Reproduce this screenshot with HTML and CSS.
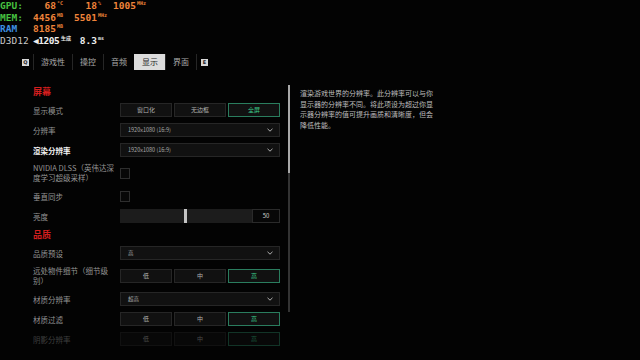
FILE: index.html
```html
<!DOCTYPE html>
<html lang="zh-CN">
<head>
    <meta charset="UTF-8">
    <title>显示设置</title>
    <link rel="stylesheet" href="styles.css">
</head>
<body>
    <div class="hud">
        <div class="hud-row">
            <span class="hud-label green">GPU:</span>
            <span class="hud-val">68</span><span class="hud-unit">°C</span>
            <span class="hud-val v2">18</span><span class="hud-unit">%</span>
            <span class="hud-val">1005</span><span class="hud-unit">MHz</span>
        </div>
        <div class="hud-row">
            <span class="hud-label green">MEM:</span>
            <span class="hud-val">4456</span><span class="hud-unit">MB</span>
            <span class="hud-val v2">5501</span><span class="hud-unit">MHz</span>
        </div>
        <div class="hud-row">
            <span class="hud-label blue">RAM</span>
            <span class="hud-val">8185</span><span class="hud-unit">MB</span>
        </div>
        <div class="hud-row">
            <span class="hud-label grey">D3D12</span>
            <span class="hud-val fps white">◀1205</span><span class="hud-unit short white">生成</span>
            <span class="hud-val v2 white">8.3</span><span class="hud-unit white">ms</span>
        </div>
    </div>

    <nav class="tabs">
        <span class="key">Q</span>
        <div class="tab">游戏性</div>
        <div class="tab">操控</div>
        <div class="tab">音频</div>
        <div class="tab active">显示</div>
        <div class="tab">界面</div>
        <span class="key">E</span>
    </nav>

    <main class="main">
        <section class="settings">
            <h3 class="group-title">屏幕</h3>

            <div class="row">
                <div class="row-label">显示模式</div>
                <div class="segmented">
                    <div class="seg">窗口化</div>
                    <div class="seg">无边框</div>
                    <div class="seg selected">全屏</div>
                </div>
            </div>

            <div class="row">
                <div class="row-label">分辨率</div>
                <div class="dropdown"><span>1920x1080 (16:9)</span><svg class="chev" viewBox="0 0 6 4"><path d="M0.5 0.8 L3 3.2 L5.5 0.8" /></svg></div>
            </div>

            <div class="row">
                <div class="row-label hot">渲染分辨率</div>
                <div class="dropdown"><span>1920x1080 (16:9)</span><svg class="chev" viewBox="0 0 6 4"><path d="M0.5 0.8 L3 3.2 L5.5 0.8" /></svg></div>
            </div>

            <div class="row tall">
                <div class="row-label">NVIDIA DLSS（英伟达深<br>度学习超级采样）</div>
                <div class="checkbox"></div>
            </div>

            <div class="row">
                <div class="row-label">垂直同步</div>
                <div class="checkbox"></div>
            </div>

            <div class="row">
                <div class="row-label">亮度</div>
                <div class="slider">
                    <div class="track"><div class="thumb"></div></div>
                    <div class="slider-val">50</div>
                </div>
            </div>

            <h3 class="group-title second">品质</h3>

            <div class="row">
                <div class="row-label">品质预设</div>
                <div class="dropdown"><span>高</span><svg class="chev" viewBox="0 0 6 4"><path d="M0.5 0.8 L3 3.2 L5.5 0.8" /></svg></div>
            </div>

            <div class="row tall">
                <div class="row-label">远处物件细节（细节级<br>别）</div>
                <div class="segmented">
                    <div class="seg">低</div>
                    <div class="seg">中</div>
                    <div class="seg selected">高</div>
                </div>
            </div>

            <div class="row">
                <div class="row-label">材质分辨率</div>
                <div class="dropdown"><span>超高</span><svg class="chev" viewBox="0 0 6 4"><path d="M0.5 0.8 L3 3.2 L5.5 0.8" /></svg></div>
            </div>

            <div class="row">
                <div class="row-label">材质过滤</div>
                <div class="segmented">
                    <div class="seg">低</div>
                    <div class="seg">中</div>
                    <div class="seg selected">高</div>
                </div>
            </div>

            <div class="row faded">
                <div class="row-label">阴影分辨率</div>
                <div class="segmented">
                    <div class="seg">低</div>
                    <div class="seg">中</div>
                    <div class="seg selected">高</div>
                </div>
            </div>
        </section>

        <div class="scrollbar"><div class="scroll-thumb"></div></div>

        <p class="desc">渲染游戏世界的分辨率。此分辨率可以与你显示器的分辨率不同。将此项设为超过你显示器分辨率的值可提升画质和清晰度，但会降低性能。</p>
    </main>
</body>
</html>
```

FILE: styles.css
```css
* {
    margin: 0;
    padding: 0;
    box-sizing: border-box;
}

body {
    width: 640px;
    height: 360px;
    overflow: hidden;
    background-color: #030303;
    color: #a0a0a0;
    font-family: "Noto Sans CJK SC", "Noto Sans", sans-serif;
    position: relative;
}

/* Overlay perf (en haut à gauche) */
.hud {
    position: absolute;
    top: 0;
    left: 0;
    font-family: "DejaVu Sans Mono", monospace;
    font-weight: bold;
    font-size: 9.5px;
    line-height: 11.5px;
}

.hud-row {
    display: flex;
    align-items: flex-start;
    height: 11.5px;
}

.hud-label {
    width: 33px;
}

.hud-label.green { color: #46c040; }
.hud-label.blue { color: #3d8fe0; }
.hud-label.grey { color: #c8c8c8; font-weight: normal; }

.hud-val {
    width: 23px;
    text-align: right;
    color: #f0843a;
}

.hud-val.v2 {
    width: 25px;
}

.hud-val.fps {
    width: 27px;
    text-align: left;
    letter-spacing: -0.5px;
}

.hud-unit {
    width: 16px;
    font-size: 5px;
    line-height: 7px;
    padding-left: 1px;
    color: #f0843a;
}

.hud-unit.short {
    width: 12px;
}

.white {
    color: #eeeeee;
}

/* Onglets */
.tabs {
    display: flex;
    align-items: center;
    height: 16px;
    margin-top: 54px;
    padding-left: 22px;
}

.key {
    width: 7px;
    height: 7px;
    background: #d8d8d8;
    color: #222;
    font-size: 5px;
    line-height: 7px;
    text-align: center;
    font-family: "DejaVu Sans", sans-serif;
    font-weight: bold;
}

.key:first-child {
    margin-right: 4px;
}

.key:last-child {
    margin-left: 4px;
}

.tab {
    height: 16px;
    padding: 0 7px;
    border-left: 1px solid #262626;
    font-size: 8px;
    line-height: 16px;
    color: #a8a8a8;
}

.tab:nth-last-child(2) {
    border-right: 1px solid #262626;
}

.tab.active {
    background: #dcdcdc;
    color: #1e1e1e;
    border-color: #dcdcdc;
}

/* Contenu */
.main {
    display: flex;
    margin-top: 15px;
}

.settings {
    width: 280px;
    padding-left: 33px;
    padding-top: 2px;
    display: flex;
    flex-direction: column;
    gap: 6px;
}

.group-title {
    font-size: 9px;
    line-height: 10px;
    height: 10px;
    font-weight: bold;
    color: #d41e1e;
}

.group-title.second {
    margin-top: 1px;
}

.row {
    display: flex;
    align-items: center;
    min-height: 14px;
}

.row.tall {
    min-height: 20px;
}

.row.tall .row-label {
    line-height: 10px;
}

.row.faded {
    opacity: 0.4;
}

.row-label {
    width: 87px;
    font-size: 7.5px;
    line-height: 11px;
    white-space: nowrap;
    color: #959595;
}

.row-label.hot {
    color: #f2f2f2;
    font-weight: bold;
}

.segmented {
    display: flex;
    gap: 2px;
    width: 160px;
    height: 14px;
}

.seg {
    flex: 1;
    background: #111111;
    border: 1px solid #262626;
    font-size: 6px;
    line-height: 12px;
    text-align: center;
    color: #b0b0b0;
}

.seg.selected {
    border-color: #2a7d5e;
    color: #3dcf8e;
}

.dropdown {
    width: 160px;
    height: 14px;
    display: flex;
    align-items: center;
    justify-content: space-between;
    padding: 0 6px 0 7px;
    background: #111111;
    border: 1px solid #262626;
    font-size: 5.5px;
    color: #a8a8a8;
}

.chev {
    width: 6px;
    height: 4px;
    fill: none;
    stroke: #b0b0b0;
    stroke-width: 1;
}

.checkbox {
    width: 10px;
    height: 11px;
    border: 1px solid #2e2e2e;
    background: #080808;
}

.slider {
    display: flex;
    width: 160px;
    height: 14px;
}

.track {
    flex: 1;
    background: #1c1c1c;
    position: relative;
}

.thumb {
    position: absolute;
    left: 64px;
    top: 0;
    width: 3px;
    height: 100%;
    background: #c4c4c4;
}

.slider-val {
    width: 28px;
    background: #070707;
    border: 1px solid #2a2a2a;
    font-size: 6px;
    line-height: 12px;
    text-align: center;
    color: #d0d0d0;
}

.scrollbar {
    width: 2px;
    height: 227px;
    margin-left: 8px;
    background: #333333;
}

.scroll-thumb {
    height: 88px;
    background: #a8a8a8;
}

.desc {
    width: 138px;
    margin-left: 10px;
    margin-top: 3px;
    font-size: 7px;
    line-height: 10.5px;
    color: #bdbdbd;
}
```
